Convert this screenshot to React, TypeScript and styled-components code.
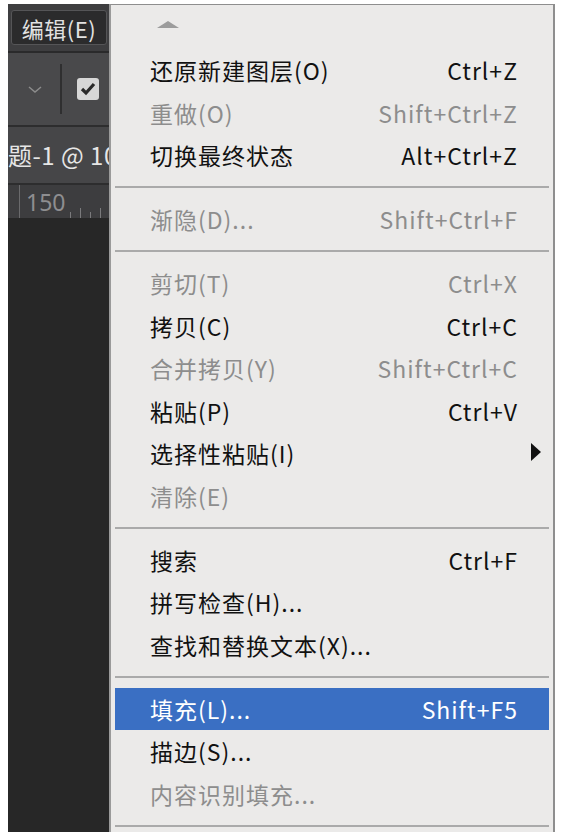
import React from "react";
import styled, { createGlobalStyle } from "styled-components";

type Item =
  | { kind: "item"; label: string; shortcut?: string; disabled?: boolean; active?: boolean; submenu?: boolean }
  | { kind: "sep" };

const items: Item[] = [
  { kind: "item", label: "还原新建图层(O)", shortcut: "Ctrl+Z" },
  { kind: "item", label: "重做(O)", shortcut: "Shift+Ctrl+Z", disabled: true },
  { kind: "item", label: "切换最终状态", shortcut: "Alt+Ctrl+Z" },
  { kind: "sep" },
  { kind: "item", label: "渐隐(D)...", shortcut: "Shift+Ctrl+F", disabled: true },
  { kind: "sep" },
  { kind: "item", label: "剪切(T)", shortcut: "Ctrl+X", disabled: true },
  { kind: "item", label: "拷贝(C)", shortcut: "Ctrl+C" },
  { kind: "item", label: "合并拷贝(Y)", shortcut: "Shift+Ctrl+C", disabled: true },
  { kind: "item", label: "粘贴(P)", shortcut: "Ctrl+V" },
  { kind: "item", label: "选择性粘贴(I)", submenu: true },
  { kind: "item", label: "清除(E)", disabled: true },
  { kind: "sep" },
  { kind: "item", label: "搜索", shortcut: "Ctrl+F" },
  { kind: "item", label: "拼写检查(H)..." },
  { kind: "item", label: "查找和替换文本(X)..." },
  { kind: "sep" },
  { kind: "item", label: "填充(L)...", shortcut: "Shift+F5", active: true },
  { kind: "item", label: "描边(S)..." },
  { kind: "item", label: "内容识别填充...", disabled: true },
  { kind: "sep" },
];

function App() {
  return (
    <>
      <GlobalStyle />
      <Frame>
        <LeftPanel>
          <MenuBar>
            <MenuButton>编辑(E)</MenuButton>
          </MenuBar>
          <OptionsBar>
            <Chevron viewBox="0 0 14 7">
              <polyline points="1,1 7,6 13,1" fill="none" stroke="#8c8c8c" strokeWidth="1.5" />
            </Chevron>
            <VDivider />
            <CheckBox>
              <svg width="16" height="14" viewBox="0 0 16 14">
                <polyline points="2,7 6,11 14,2" fill="none" stroke="#2a2a2a" strokeWidth="3.2" />
              </svg>
            </CheckBox>
          </OptionsBar>
          <DocTab>题-1 @ 10</DocTab>
          <Ruler>
            <RulerMark />
            <RulerNum>150</RulerNum>
            <Ticks>
              <Tick $h={6} />
              <Tick $h={10} />
              <Tick $h={6} />
              <Tick $h={10} />
            </Ticks>
          </Ruler>
          <Canvas />
        </LeftPanel>

        <Menu>
          <ScrollUp>
            <UpArrow />
          </ScrollUp>
          {items.map((it, i) =>
            it.kind === "sep" ? (
              <Separator key={i} />
            ) : (
              <Row key={i} $disabled={it.disabled} $active={it.active}>
                <Label>{it.label}</Label>
                {it.shortcut && <Shortcut>{it.shortcut}</Shortcut>}
                {it.submenu && <SubArrow />}
              </Row>
            )
          )}
        </Menu>
      </Frame>
    </>
  );
}

const GlobalStyle = createGlobalStyle`
  html, body {
    margin: 0;
    padding: 0;
    background: #ffffff;
  }
  body {
    font-family: "Noto Sans CJK SC", "Noto Sans", sans-serif;
  }
`;

const Frame = styled.div`
  display: flex;
  width: 547px;
  height: 828px;
  margin: 4px 0 0 8px;
  overflow: hidden;
`;

const LeftPanel = styled.div`
  width: 101px;
  flex-shrink: 0;
  display: flex;
  flex-direction: column;
  background: #272727;
`;

const MenuBar = styled.div`
  height: 47px;
  background: #3e3e40;
  border-bottom: 2px solid #2a2a2b;
  display: flex;
  align-items: center;
  padding-left: 3px;
`;

const MenuButton = styled.div`
  width: 96px;
  height: 35px;
  box-sizing: border-box;
  background: #2b2b2c;
  border: 1px solid #555557;
  border-radius: 3px;
  color: #e2e2e2;
  font-size: 22px;
  letter-spacing: 0.5px;
  display: flex;
  align-items: center;
  justify-content: center;
  white-space: nowrap;
`;

const OptionsBar = styled.div`
  height: 72px;
  background: #49494b;
  border-bottom: 2px solid #2d2d2e;
  display: flex;
  align-items: center;
  padding-left: 20px;
`;

const Chevron = styled.svg`
  width: 14px;
  height: 7px;
`;

const VDivider = styled.div`
  width: 2px;
  height: 50px;
  background: #2f2f30;
  margin-left: 18px;
`;

const CheckBox = styled.div`
  width: 22px;
  height: 22px;
  margin-left: 15px;
  border-radius: 3px;
  background: #d7d7d7;
  display: flex;
  align-items: center;
  justify-content: center;
`;

const DocTab = styled.div`
  height: 56px;
  background: #464648;
  border-bottom: 2px solid #2d2d2e;
  color: #e6e6e6;
  font-size: 24px;
  letter-spacing: 0.5px;
  line-height: 56px;
  white-space: nowrap;
  overflow: hidden;
`;

const Ruler = styled.div`
  height: 33px;
  background: #3d3d3f;
  display: flex;
  align-items: flex-end;
`;

const RulerMark = styled.div`
  width: 1px;
  height: 33px;
  flex-shrink: 0;
  background: #6a6a6c;
  margin-left: 11px;
`;

const RulerNum = styled.div`
  align-self: center;
  color: #8e8e90;
  font-size: 23px;
  line-height: 30px;
  margin-left: 6px;
  font-family: "Noto Sans", sans-serif;
`;

const Ticks = styled.div`
  display: flex;
  align-items: flex-end;
  gap: 9px;
  margin-left: 5px;
`;

const Tick = styled.div<{ $h: number }>`
  width: 1px;
  height: ${(p) => p.$h}px;
  flex-shrink: 0;
  background: #7a7a7c;
`;

const Canvas = styled.div`
  flex: 1;
  background: #272727;
`;

const Menu = styled.div`
  flex: 1;
  background: #ebeae9;
  border-left: 2px solid #9a9a9a;
  border-right: 2px solid #8e8e8e;
  border-top: 1px solid #8e8e8e;
  padding: 0 4px;
  display: flex;
  flex-direction: column;
  overflow: hidden;
`;

const ScrollUp = styled.div`
  height: 44px;
  flex-shrink: 0;
  display: flex;
  align-items: center;
  padding-left: 42px;
  padding-bottom: 6px;
  box-sizing: border-box;
`;

const UpArrow = styled.div`
  width: 0;
  height: 0;
  border-left: 11px solid transparent;
  border-right: 11px solid transparent;
  border-bottom: 7px solid #9c9c9c;
`;

const Row = styled.div<{ $disabled?: boolean; $active?: boolean }>`
  height: 42.5px;
  flex-shrink: 0;
  display: flex;
  align-items: center;
  padding: 0 32px 0 35px;
  font-size: 23px;
  letter-spacing: 1px;
  position: relative;
  background: ${(p) => (p.$active ? "#3a6fc3" : "transparent")};
  color: ${(p) => (p.$active ? "#ffffff" : p.$disabled ? "#8d8d8d" : "#111111")};
`;

const Label = styled.span`
  flex: 1;
  white-space: nowrap;
`;

const Shortcut = styled.span`
  white-space: nowrap;
  margin-right: -1px;
`;

const SubArrow = styled.div`
  position: absolute;
  right: 8px;
  top: 50%;
  margin-top: -10px;
  width: 0;
  height: 0;
  border-top: 9px solid transparent;
  border-bottom: 9px solid transparent;
  border-left: 10px solid #111111;
`;

const Separator = styled.div`
  height: 21.5px;
  flex-shrink: 0;
  display: flex;
  align-items: center;
  &::after {
    content: "";
    flex: 1;
    height: 2px;
    background: #aaaaaa;
  }
`;

export default App;
